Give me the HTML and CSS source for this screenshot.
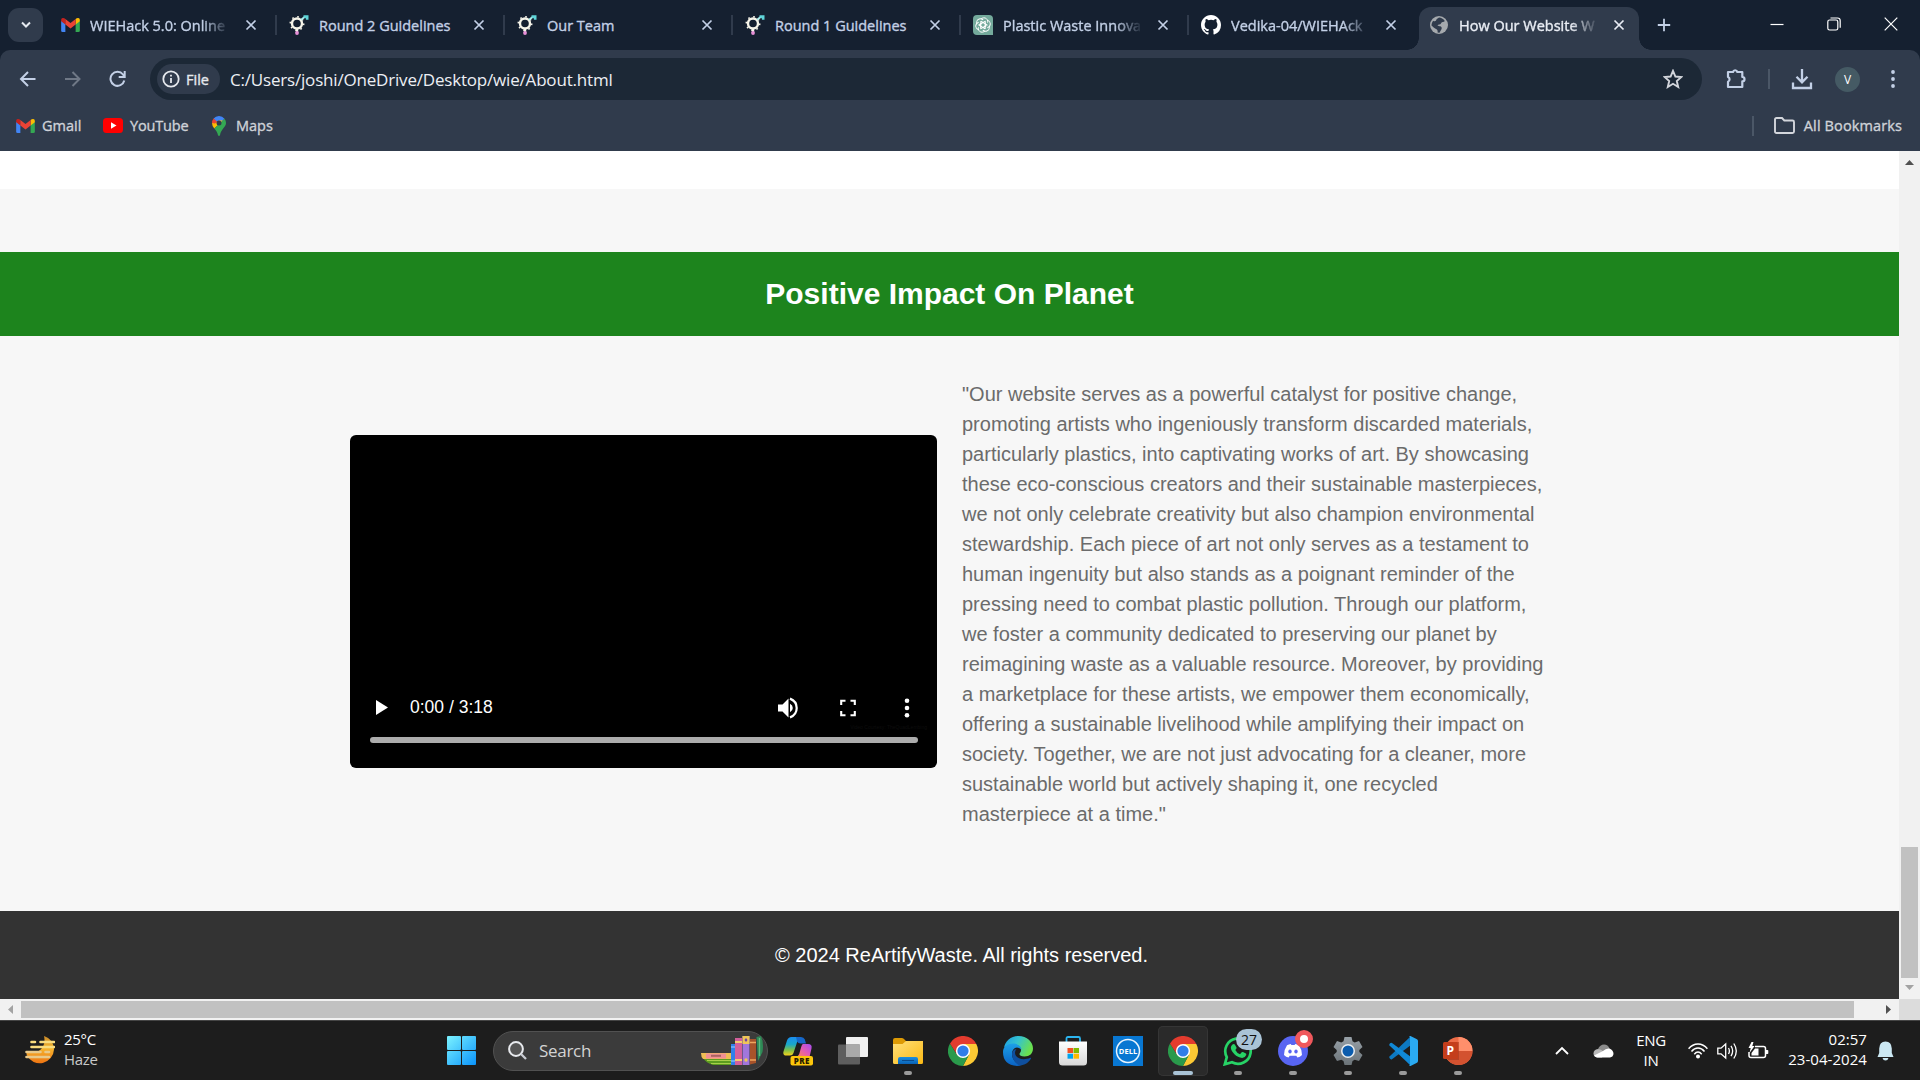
FILE: index.html
```html
<!DOCTYPE html>
<html lang="en">
<head>
<meta charset="utf-8">
<title>How Our Website Works</title>
<link rel="stylesheet" href="styles.css">
</head>
<body>
<svg class="defs" width="0" height="0" aria-hidden="true">
  <defs>
    <linearGradient id="moon" x1="0" y1="0" x2="0" y2="1"><stop offset="0" stop-color="#c98a2a"/><stop offset=".45" stop-color="#f5b52e"/><stop offset="1" stop-color="#ee7412"/></linearGradient>
    <linearGradient id="win" gradientUnits="userSpaceOnUse" x1="0" y1="0" x2="29" y2="29"><stop offset="0" stop-color="#7cf3ff"/><stop offset="1" stop-color="#0a93fb"/></linearGradient>
    <linearGradient id="cpA" x1="0" y1="0" x2="0" y2="1"><stop offset="0" stop-color="#1b8df0"/><stop offset=".4" stop-color="#19a7c9"/><stop offset=".7" stop-color="#7cc04a"/><stop offset="1" stop-color="#f4d21c"/></linearGradient>
    <linearGradient id="cpB" x1="1" y1="0" x2="0" y2="1"><stop offset="0" stop-color="#a44cf0"/><stop offset=".5" stop-color="#e35bb4"/><stop offset="1" stop-color="#ff8a4a"/></linearGradient>
    <linearGradient id="fold" x1="0" y1="0" x2="1" y2="1"><stop offset="0" stop-color="#ffe07a"/><stop offset="1" stop-color="#fbb914"/></linearGradient>
    <linearGradient id="blue" x1="0" y1="0" x2="0" y2="1"><stop offset="0" stop-color="#1b8fe0"/><stop offset="1" stop-color="#0a62b5"/></linearGradient>
    <linearGradient id="edgeA" x1="0" y1="0" x2="1" y2=".4"><stop offset="0" stop-color="#1a9be6"/><stop offset=".5" stop-color="#35c3cf"/><stop offset="1" stop-color="#6ae04e"/></linearGradient>
    <linearGradient id="edgeB" x1="0" y1="0" x2="0" y2="1"><stop offset="0" stop-color="#1da0e8"/><stop offset="1" stop-color="#0a62c4"/></linearGradient>
    <linearGradient id="store" x1="0" y1="0" x2="0" y2="1"><stop offset="0" stop-color="#fff"/><stop offset="1" stop-color="#d8d8d8"/></linearGradient>
    <linearGradient id="gear" x1="0" y1="0" x2="0" y2="1"><stop offset="0" stop-color="#98a1a8"/><stop offset="1" stop-color="#6b7378"/></linearGradient>
    <symbol id="close" viewBox="0 0 12 12"><path d="M1.500 1.500l9 9m0-9l-9 9" fill="none" stroke="currentColor" stroke-width="1.700"/></symbol>
    <symbol id="gmail" viewBox="0 0 20 15"><path d="M0 3v10.600Q0 15 1.400 15H4.500V6z" fill="#4285f4"/><path d="M20 3v10.600Q20 15 18.600 15H15.500V6z" fill="#34a853"/><path d="M15.500 1.200V7L20 3.600V2.100C20 .2 18-.6 16.600.4z" fill="#fbbc04"/><path d="M4.500 1.200V7L0 3.600V2.100C0 .2 2-.6 3.400.4z" fill="#c5221f"/><path d="M4.500 7V1.200L10 5.400l5.500-4.200V7L10 11.200z" fill="#ea4335"/></symbol>
    <symbol id="gender" viewBox="0 0 20 20"><circle cx="8" cy="8.500" r="5" fill="none" stroke="#f7f5ea" stroke-width="2.400"/><circle cx="8" cy="8.500" r="6.700" fill="none" stroke="#f7f5ea" stroke-width="1.600" stroke-dasharray="1.700 3.560"/><path d="M12 4.800l4-3" stroke="#aff0ee" stroke-width="1.800"/><path d="M14.500.3h5v4.400h-2.500l-.4-1.700-2.100-.4z" fill="#5fd4d8"/><path d="M8 14v4" stroke="#f7f5ea" stroke-width="2.400"/><circle cx="8" cy="18" r="1.900" fill="#e68fd6"/></symbol>
    <symbol id="gpt" viewBox="0 0 20 20"><path d="M4 0h12q4 0 4 4v16H4q-4 0-4-4V4q0-4 4-4z" fill="#74aa9c"/><g fill="none" stroke="#fff" stroke-width="1"><path id="petal" d="M8 4.100C9.500 2.500 12 2.400 13.400 3.700 14.800 5 14.800 6.500 14.500 7.600M12.300 6.200v4.900M12.300 6.200L8.200 8.500"/><use href="#petal" transform="rotate(60 10 10)"/><use href="#petal" transform="rotate(120 10 10)"/><use href="#petal" transform="rotate(180 10 10)"/><use href="#petal" transform="rotate(240 10 10)"/><use href="#petal" transform="rotate(300 10 10)"/></g></symbol>
    <symbol id="github" viewBox="0 0 16 16"><path fill="#fff" d="M8 0C3.580 0 0 3.580 0 8c0 3.540 2.290 6.530 5.470 7.590.4.070.55-.17.55-.38 0-.19-.01-.82-.01-1.490-2.010.37-2.530-.49-2.690-.94-.09-.23-.48-.94-.82-1.130-.28-.15-.68-.52-.01-.53.63-.01 1.080.58 1.230.82.72 1.210 1.870.87 2.330.66.07-.52.28-.87.51-1.070-1.780-.2-3.640-.89-3.640-3.950 0-.87.31-1.590.82-2.150-.08-.2-.36-1.020.08-2.120 0 0 .67-.21 2.200.82a7.500 7.500 0 014 0c1.530-1.040 2.200-.82 2.200-.82.44 1.100.16 1.920.08 2.120.51.560.82 1.270.82 2.150 0 3.070-1.870 3.750-3.650 3.950.29.250.54.730.54 1.480 0 1.070-.01 1.930-.01 2.200 0 .21.150.46.55.38A8 8 0 0016 8c0-4.420-3.580-8-8-8z"/></symbol>
    <symbol id="chrome" viewBox="0 0 30 30"><path d="M15 8h13.300A15 15 0 0 1 15 30l6.100-11.500z" fill="#fcc934"/><path d="M8.900 18.500L2 7.500A15 15 0 0 0 15 30l6.100-11.500z" fill="#2a9a4b"/><path d="M2 7.500A15 15 0 0 1 28.300 8H15l-6 10.500z" fill="#e33b2e"/><circle cx="15" cy="15" r="7.100" fill="#fff"/><circle cx="15" cy="15" r="5.600" fill="#2f7de9"/></symbol>
  </defs>
</svg>

<div class="tabstrip">
  <div class="tab-search"><svg width="12" height="8" viewBox="0 0 12 8"><path d="M2 1.500l4 4 4-4" fill="none" stroke="#e4e9f0" stroke-width="2"/></svg></div>
  <div class="tab"><svg class="fav small"><use href="#gmail"/></svg><span class="tab-title fade">WIEHack 5.0: Online</span><svg class="x"><use href="#close"/></svg></div>
  <div class="tab"><svg class="fav"><use href="#gender"/></svg><span class="tab-title">Round 2 Guidelines</span><svg class="x"><use href="#close"/></svg></div>
  <div class="tab"><svg class="fav"><use href="#gender"/></svg><span class="tab-title">Our Team</span><svg class="x"><use href="#close"/></svg></div>
  <div class="tab"><svg class="fav"><use href="#gender"/></svg><span class="tab-title">Round 1 Guidelines</span><svg class="x"><use href="#close"/></svg></div>
  <div class="tab"><svg class="fav"><use href="#gpt"/></svg><span class="tab-title fade">Plastic Waste Innova</span><svg class="x"><use href="#close"/></svg></div>
  <div class="tab last"><svg class="fav"><use href="#github"/></svg><span class="tab-title fade">Vedika-04/WIEHAck</span><svg class="x"><use href="#close"/></svg></div>
  <div class="tab active"><svg class="fav" viewBox="0 0 20 20"><circle cx="10" cy="10" r="9" fill="#a5a9ad"/><path d="M10 2.500c2 .2 4.500 1.300 5.800 3.500-1.300 1.500-3.300.5-3.800 2.500-.5 1.500-3 .6-3.500 2 1.500 1 4.500.2 4.200 3-.2 1.700-1.700 2-1.700 4-1.200.3-2.400 0-2.400 0 .2-2-.1-3-1.600-3.500-1.700-.6-3-2.500-4.500-3.500 0-2 .7-3.500 1.700-4.800 1 .9 2.800.8 3-.6.100-1.100 1.500-1.500 2.800-2.600z" fill="#303b4c"/></svg><span class="tab-title fade">How Our Website W</span><svg class="x"><use href="#close"/></svg></div>
  <svg class="plus" width="14" height="14" viewBox="0 0 14 14"><path d="M7 .8v12.400M.8 7h12.400" stroke="#c3d0e6" stroke-width="1.800"/></svg>
  <div class="win-controls">
    <svg width="14" height="14" viewBox="0 0 14 14"><path d="M.5 7.500h13" stroke="#fff" stroke-width="1.200"/></svg>
    <svg width="14" height="14" viewBox="0 0 14 14" fill="none" stroke="#fff" stroke-width="1.200"><rect x=".8" y="3" width="10" height="10" rx="1.800"/><path d="M3.500 1h7q2.700 0 2.700 2.700v7"/></svg>
    <svg width="14" height="14" viewBox="0 0 14 14"><path d="M.7.7l12.600 12.600m0-12.600L.7 13.300" stroke="#fff" stroke-width="1.200"/></svg>
  </div>
</div>

<div class="chrome-body">
  <div class="toolbar">
    <div class="nav">
      <svg width="18" height="18" viewBox="0 0 18 18" fill="none" stroke="#c3d0e6" stroke-width="2"><path d="M16.500 9H2.500M9 2L2 9l7 7"/></svg>
      <svg width="18" height="18" viewBox="0 0 18 18" fill="none" stroke="#6f7886" stroke-width="2"><path d="M1 9h14M8.500 2l7 7-7 7"/></svg>
      <svg width="18" height="18" viewBox="0 0 18 18" fill="none" stroke="#c3d0e6" stroke-width="2"><path d="M15.300 10.500A7 7 0 1 1 14 4.500l1.500 1.700M15.700 1v6h-6"/></svg>
    </div>
    <div class="omnibox">
      <div class="chip"><svg width="18" height="18" viewBox="0 0 18 18"><circle cx="9" cy="9" r="7.700" fill="none" stroke="#e6e9ee" stroke-width="1.800"/><path d="M9 8v5M9 4.700v1.900" stroke="#e6e9ee" stroke-width="1.800"/></svg><span class="chip-text">File</span></div>
      <span class="url">C:/Users/joshi/OneDrive/Desktop/wie/About.html</span>
      <svg class="star" width="20" height="20" viewBox="0 0 20 20"><path d="M10 1.800l2.400 5.700 6 .5-4.600 4 1.400 6L10 14.800 4.800 18l1.400-6L1.600 8l6-.5z" fill="none" stroke="#d3d6dc" stroke-width="1.900"/></svg>
    </div>
    <svg class="puzzle" width="22" height="22" viewBox="0 0 22 22"><path d="M3 4h5a2.200 2.200 0 0 1 4.300 0h5V9a2.200 2.200 0 0 1 0 4.400v5.600H3v-5.200a2.700 2.700 0 0 0 0-4.900z" fill="none" stroke="#c3d0e6" stroke-width="2.200" stroke-linejoin="round"/></svg>
    <i class="vline"></i>
    <svg class="dl" width="22" height="22" viewBox="0 0 22 22" fill="none" stroke="#c3d0e6" stroke-width="2.300"><path d="M11 1v13M5.500 8.800L11 14.300l5.500-5.500M2 14.500v5.500h18v-5.500"/></svg>
    <div class="avatar">V</div>
    <svg class="menu" width="6" height="20" viewBox="0 0 6 20" fill="#c3d0e6"><circle cx="3" cy="3" r="1.900"/><circle cx="3" cy="10" r="1.900"/><circle cx="3" cy="17" r="1.900"/></svg>
  </div>
  <div class="bookmarks">
    <div class="bm b1"><svg width="19" height="14"><use href="#gmail"/></svg><span>Gmail</span></div>
    <div class="bm b2"><svg width="20" height="15" viewBox="0 0 20 15"><rect width="20" height="15" rx="3.500" fill="#f00"/><path d="M8 4.300l5.500 3.200L8 10.700z" fill="#fff"/></svg><span>YouTube</span></div>
    <div class="bm b3"><svg width="14" height="20" viewBox="0 0 14 20"><path d="M7 0a7 7 0 0 1 5.500 2.700L6 9 1.600 2.500A7 7 0 0 1 7 0z" fill="#4285f4"/><path d="M1.600 2.500A7 7 0 0 0 0 7l3 2.500L5.500 6z" fill="#ea4335"/><path d="M0 7q0 3 2.300 5.500L11 4.500 7 4.500 3 7.500z" fill="#fbbc04"/><path d="M12.500 2.700Q14 4.500 14 7c0 4-5 6-6 12.300q-1 1.400-2 0C5.500 16 4 14.500 2.300 12.500z" fill="#34a853"/><circle cx="7" cy="7" r="2.500" fill="#303b4c"/></svg><span>Maps</span></div>
    <div class="bm all"><i class="vline"></i><svg width="21" height="17" viewBox="0 0 21 17"><path d="M1 14.500v-12Q1 1 2.500 1H8l2.300 2.500h8.200Q20 3.500 20 5v9.500q0 1.500-1.500 1.500h-16Q1 16 1 14.500z" fill="none" stroke="#d3d6dc" stroke-width="1.900"/></svg><span>All Bookmarks</span></div>
  </div>
</div>

<div class="viewport">
  <main class="page">
    <div class="white-strip"></div>
    <div class="gap"></div>
    <h2 class="banner">Positive Impact On Planet</h2>
    <section class="impact">
      <div class="video">
        <div class="watermark">Video Courtesy: TheQuadLembing</div>
        <div class="controls">
          <svg class="play" width="12" height="15" viewBox="0 0 12 15"><path d="M0 0l12 7.500L0 15z" fill="#fff"/></svg>
          <span class="time">0:00 / 3:18</span>
          <svg class="vol" width="20" height="22" viewBox="0 0 20 22"><path d="M0 7.500h4.500L10.500 1.500v19l-6-6H0z" fill="#fff"/><path d="M12 6.700q2.800 1.500 2.800 4.300T12 15.300z" fill="#fff"/><path d="M12 1.600q6.700 2.600 6.700 9.400T12 20.400" fill="none" stroke="#fff" stroke-width="2.200"/></svg>
          <svg class="full" width="16" height="18" viewBox="0 0 16 18"><path d="M1.200 6V1.700h4.300M10.500 1.700h4.300V6M14.800 12v4.300h-4.300M5.500 16.300H1.200V12" fill="none" stroke="#fff" stroke-width="2.100"/></svg>
          <svg class="more" width="6" height="20" viewBox="0 0 6 20" fill="#fff"><circle cx="3" cy="2.800" r="2.300"/><circle cx="3" cy="10" r="2.300"/><circle cx="3" cy="17.200" r="2.300"/></svg>
        </div>
        <div class="progress"></div>
      </div>
      <p class="copy">"Our website serves as a powerful catalyst for positive change, promoting artists who ingeniously transform discarded materials, particularly plastics, into captivating works of art. By showcasing these eco-conscious creators and their sustainable masterpieces, we not only celebrate creativity but also champion environmental stewardship. Each piece of art not only serves as a testament to human ingenuity but also stands as a poignant reminder of the pressing need to combat plastic pollution. Through our platform, we foster a community dedicated to preserving our planet by reimagining waste as a valuable resource. Moreover, by providing a marketplace for these artists, we empower them economically, offering a sustainable livelihood while amplifying their impact on society. Together, we are not just advocating for a cleaner, more sustainable world but actively shaping it, one recycled masterpiece at a time."</p>
    </section>
    <footer class="footer">© 2024 ReArtifyWaste. All rights reserved.</footer>
  </main>
  <div class="vscroll">
    <svg width="9" height="5" viewBox="0 0 9 5"><path d="M4.500 0L9 5H0z" fill="#505050"/></svg>
    <div class="vthumb"></div>
    <svg width="9" height="5" viewBox="0 0 9 5"><path d="M0 0h9L4.500 5z" fill="#a3a3a3"/></svg>
  </div>
  <div class="hscroll">
    <svg width="5" height="9" viewBox="0 0 5 9"><path d="M5 0v9L0 4.500z" fill="#a3a3a3"/></svg>
    <div class="hthumb"></div>
    <svg width="5" height="9" viewBox="0 0 5 9"><path d="M0 0l5 4.500L0 9z" fill="#505050"/></svg>
  </div>
  <div class="corner"></div>
</div>

<div class="taskbar">
  <div class="weather">
    <svg width="30" height="30" viewBox="0 0 30 30"><path d="M19 1C25 3 29 8 29 14.500a14.300 14.300 0 0 1-27 6q-1-2 0-3C11 20 22 14 19 1z" fill="url(#moon)"/><g stroke="#f8dc7e" stroke-width="2.600" stroke-linecap="round"><path d="M6.500 7h3.500M15.500 7H29M6.500 12H29"/><path d="M1.500 17h14M20.500 17h3.500M1.500 22H24" stroke="#e8c98a"/></g></svg>
    <div class="weather-text"><span>25°C</span><span class="dim">Haze</span></div>
  </div>
  <svg class="winlogo" width="29" height="29" viewBox="0 0 29 29" fill="url(#win)"><rect width="14" height="14" rx="1"/><rect x="15" width="14" height="14" rx="1"/><rect y="15" width="14" height="14" rx="1"/><rect x="15" y="15" width="14" height="14" rx="1"/></svg>
  <div class="search">
    <svg width="19" height="19" viewBox="0 0 19 19"><circle cx="8" cy="8" r="6.900" fill="#555" stroke="#e8eaee" stroke-width="2"/><path d="M13 13l5 5" stroke="#c9ccd2" stroke-width="2.300"/></svg>
    <span class="search-text">Search</span>
    <svg class="books" width="62" height="29" viewBox="0 0 62 29"><path d="M2 22h28v7H12q-7-2-10-7z" fill="#5c9c1f"/><path d="M6 24.500h24M10 27.500h20" stroke="#a8cf4a" stroke-width="1.200"/><path d="M0 17h30v6H2q-2-2-2-6z" fill="#eebd55"/><path d="M5 17.500h20v5H5z" fill="#f08f94"/><path d="M10 18.800h10v2H10z" fill="#a9635f"/><rect x="30" y="8" width="4" height="21" fill="#2f80ea"/><path d="M30 11h4M30 25h4" stroke="#9fd0ff"/><rect x="34" y="2" width="7" height="27" fill="#d3609c"/><path d="M34 6h7M34 24h7" stroke="#f5cb6d" stroke-width="1.800"/><rect x="41.500" width="7" height="29" fill="#a176dc"/><path d="M41.500 0h7v8h-7z" fill="#efc558"/><path d="M45 2l1.500 2L45 6l-1.500-2z" fill="#6a3fa8"/><circle cx="45" cy="24" r="1.700" fill="#efc558"/><path d="M49 3h6v24l-6 1.500z" fill="#a8532a"/><path d="M49 6.500h6M49 24h6" stroke="#efa65e" stroke-width="1.600"/><path d="M55.500 1l4.500-1Q63 7 61.500 16L57 25z" fill="#2f8a56"/><path d="M58.500 2v18" stroke="#62b983" stroke-width="1.300"/></svg>
  </div>
  <div class="apps">
    <div class="app"><svg width="30" height="30" viewBox="0 0 30 30"><path d="M4 4.500Q5.200 1 8.500 1H18q-2.500.5-3.400 3.500L10.500 17q-.8 2.500-3.500 2.500H3.500Q-.5 19.500.5 15.500z" fill="url(#cpA)"/><path d="M13 1h5q3 0 3.800 2.500L23 7.500h-5.500q-2.500 0-3.400-2z" fill="#1667c9"/><path d="M20 8h5q4.500 0 3.500 4.500L26.500 21H13q2.500-.8 3.200-3l2-7Q19 8 20 8z" fill="url(#cpB)"/><rect x="7.500" y="20" width="22.500" height="9.500" rx="2" fill="#fdc60b"/><text x="18.800" y="27.700" text-anchor="middle" class="pre">PRE</text></svg></div>
    <div class="app"><svg width="30" height="30" viewBox="0 0 30 30"><rect x="8" y="1" width="22" height="20" rx="1" fill="#f0f0f0"/><rect y="8.500" width="22" height="20" rx="1" fill="#5e5e5e"/><rect x="8" y="8.500" width="14" height="12.500" fill="#a9a9a9"/></svg></div>
    <div class="app"><svg width="30" height="30" viewBox="0 0 30 30"><path d="M0 4q0-2 2-2h7q1.500 0 2.500 1.500L13 5v4H0z" fill="#dd9a05"/><path d="M0 8h9.500L13 5h17v21.500q0 1.500-1.500 1.500h-27Q0 28 0 26.500z" fill="url(#fold)"/><path d="M5 28v-5q0-2 2-2h16q2 0 2 2v5z" fill="url(#blue)"/><path d="M9 24.500h12" stroke="#0a4a8c"/></svg><i class="run"></i></div>
    <div class="app"><svg width="30" height="30"><use href="#chrome"/></svg></div>
    <div class="app"><svg width="30" height="30" viewBox="0 0 30 30"><path d="M1 12C2 5 8 0 15.500 0 24 0 30 6 30 12.500c0 5-3.500 8-8.500 8-3.500 0-5-1.200-5-2.500 0-1 1.500-1.500 1.500-4C18 11 15 8.500 11 8.500 6 8.500 2 11 1 12z" fill="url(#edgeA)"/><path d="M0 16C0 10.500 5 7.500 10 7.500c5 0 8.500 3 8.500 6.500 0 0-1.500-2.500-4.500-2.500s-5 3-5 6.500c0 5 4 10 9.500 11Q16.500 30 14 30 0 29 0 16z" fill="url(#edgeB)"/><path d="M9.500 15.500C8 19 10 26 16 29.300c5 .5 9.500-2.500 12-6.800q.3-1-.7-.7C20 25 12.500 22.500 12 17q0-2.500 1.500-4-2.800.1-4 2.500z" fill="#0f4f9e"/></svg></div>
    <div class="app"><svg width="30" height="30" viewBox="0 0 30 30"><path d="M8.500 6V2.500Q8.500 1 10 1h10.500Q22 1 22 2.500V6" fill="none" stroke="#2cb5f0" stroke-width="1.800"/><path d="M1 5.500h28V26q0 3.500-3.500 3.500h-21Q1 29.500 1 26z" fill="url(#store)"/><path d="M9.500 12H15v5H9.500z" fill="#f25022"/><path d="M15.500 12H21v5h-5.500z" fill="#7fba00"/><path d="M9.500 17.700H15v5H9.500z" fill="#00a4ef"/><path d="M15.500 17.700H21v5h-5.500z" fill="#ffb900"/></svg></div>
    <div class="app"><svg width="30" height="30" viewBox="0 0 30 30"><path d="M0 0h30v30H0z" fill="#0877d2"/><circle cx="15" cy="15" r="11.500" fill="none" stroke="#e9f4fd" stroke-width="1.500"/><text x="15" y="18" text-anchor="middle" class="dell" textLength="18.500">DELL</text></svg></div>
    <div class="app current"><svg width="30" height="30"><use href="#chrome"/></svg><i class="run"></i></div>
    <div class="app"><svg width="30" height="30" viewBox="0 0 30 30"><path d="M1.800 28.300l2-7.200A12.700 12.700 0 1 1 9 26.300z" fill="#1d1d1d" stroke="#27d366" stroke-width="2.700"/><path d="M9.500 8.500q1.300-1.200 2.300 0l1.700 3q.3 1-1.200 2.500 1.500 3 4.700 4.200l1.700-1.900q.6-.5 1.300-.2l2.900 1.500q.6.400.3 1.500-.9 2.700-4 2.800C13.500 21.700 8 15.500 7.800 11.700q.1-1.900 1.700-3.200z" fill="#27d366"/></svg><span class="badge">27</span><i class="run"></i></div>
    <div class="app"><svg width="30" height="30" viewBox="0 0 30 30"><circle cx="15" cy="15" r="15" fill="#5865f2"/><path d="M9 9.200q2-1 3.800-1.200l.6 1.100h3.200l.6-1.100q1.800.200 3.800 1.200Q24 13.500 24 19q-2 2-4.600 2.500l-1.100-1.700h-6.600l-1.100 1.700Q8 21 6 19 6 13.500 9 9.200z" fill="#fff"/><ellipse cx="12" cy="15.500" rx="1.700" ry="1.900" fill="#5865f2"/><ellipse cx="18" cy="15.500" rx="1.700" ry="1.900" fill="#5865f2"/></svg><span class="dot"></span><i class="run"></i></div>
    <div class="app"><svg width="30" height="30" viewBox="0 0 30 30"><path d="M11.500 1h7l1 4.200 2.200 1.300 4.300-1.400 3.500 6-3.200 3v2l3.200 3-3.500 6-4.300-1.400-2.200 1.300-1 4h-7l-1-4-2.200-1.300L4 25.100l-3.500-6 3.200-3v-2l-3.200-3 3.500-6 4.300 1.400 2.200-1.300z" fill="url(#gear)"/><circle cx="15" cy="15" r="7" fill="#eceff1"/><circle cx="15" cy="15" r="5.500" fill="#0b5cad"/></svg><i class="run"></i></div>
    <div class="app"><svg width="30" height="30" viewBox="0 0 30 30"><path d="M1.500 20.500L22 1l1 8L4 23.300q-1 .5-2-.5-1.200-1.200-.5-2.300z" fill="#0d79c2"/><path d="M1.500 9.500Q.8 8.400 2 7.200q1-.8 2-.3L23 21l-1 8z" fill="#1088d6"/><path d="M21 30q1-.5 1-2V2q0-1.500-1-2l1.500 0 6 3Q30 3.700 30 5v20q0 1.300-1.500 2l-6 3z" fill="#2aaaf2"/></svg><i class="run"></i></div>
    <div class="app"><svg width="30" height="30" viewBox="0 0 30 30"><circle cx="15.500" cy="15" r="14" fill="#ed6c47"/><path d="M15.500 1a14 14 0 0 1 14 14h-14z" fill="#ff8f6b"/><path d="M1.500 15h28a14 14 0 0 1-28 0z" fill="#d35230"/><path d="M4 6h12v18H5z" fill="#a53a1f" opacity=".6"/><rect y="6" width="15" height="17" rx="1.500" fill="#c43e1c"/><text x="7.300" y="19" text-anchor="middle" class="ppt">P</text></svg><i class="run"></i></div>
  </div>
  <div class="tray">
    <svg class="chev" width="14" height="9" viewBox="0 0 14 9"><path d="M1 8l6-6 6 6" fill="none" stroke="#fff" stroke-width="1.800"/></svg>
    <svg class="cloud" width="21" height="14" viewBox="0 0 21 14"><path d="M5 5Q7 .5 11 .5q4 0 5.500 4L10 10z" fill="#8b8b8b"/><path d="M4.500 13.500Q.5 13 .5 9.500q0-4 4.500-4.500 3 0 6 3l-2 5.500z" fill="#b8b8b8"/><path d="M4 13.500q-2-.5-3-2L10 7q3-3 6.500-2.500Q20.500 6 20.500 10q-.5 3-3.500 3.500z" fill="#fff"/></svg>
    <div class="lang"><span>ENG</span><span>IN</span></div>
    <svg class="wifi" width="20" height="16" viewBox="0 0 20 16" fill="none" stroke="#fff" stroke-width="1.400"><path d="M.6 5.800Q4.500 1 10 1t9.400 4.800M3.500 8.500Q6.300 5 10 5t6.500 3.500M6.300 11.200Q8 9 10 9t3.700 2.200"/><circle cx="10" cy="13.500" r="1.300" fill="#fff"/></svg>
    <svg class="spk" width="21" height="18" viewBox="0 0 21 18" fill="none" stroke="#fff" stroke-width="1.300"><path d="M.8 6.200H4L8.700 2v14L4 11.800H.8zM11.500 6q1.800 3 0 6M14 3.800q3.300 5.200 0 10.400M16.800 1.500q5 7.500 0 15"/></svg>
    <svg class="bat" width="21" height="18" viewBox="0 0 21 18"><path d="M7 4.500h8.500q2 0 2 2v7q0 2-2 2H3q-2 0-2-2V10" fill="none" stroke="#fff" stroke-width="1.500"/><path d="M7 6.500h3.500v7h-7V11z" fill="#fff"/><path d="M18 8h1.500q.8 0 .8.800v2.400q0 .8-.8.800H18z" fill="#fff"/><path d="M3.500 0L.5 6h2.200L1.500 11 6.500 4H4.300L5.500 0z" fill="#fff"/></svg>
    <div class="clock"><span>02:57</span><span>23-04-2024</span></div>
    <svg class="bell" width="17" height="20" viewBox="0 0 17 20"><path d="M8.500.5q6 0 6.300 7v4.500L16.500 16H.5l1.700-4V7.500q.3-7 6.300-7zM5.500 17h6q-.7 2.500-3 2.500t-3-2.500z" fill="#cbe8f3"/></svg>
  </div>
</div>
</body>
</html>
```

FILE: styles.css
```css
* { box-sizing: border-box; }
html, body { margin: 0; height: 100%; overflow: hidden; }
body {
  display: flex; flex-direction: column;
  width: 1920px; height: 1080px;
  background: #152030;
  font-family: "Open Sans", "Noto Sans", sans-serif;
}
svg { display: block; flex: none; }
.defs { position: absolute; }

/* Tab strip */
.tabstrip { display: flex; height: 50px; padding-left: 8px; background: #152030; }
.tab-search {
  display: flex; align-items: center; justify-content: center;
  width: 35px; height: 34px; margin: 8px 4px 0 0;
  border-radius: 11px; background: #303b4c;
}
.tab {
  position: relative; display: flex; align-items: center;
  width: 228px; height: 50px; padding: 0 18px 0 14px; color: #c3d0e6;
}
.tab::after {
  content: ""; position: absolute; right: -2px; top: 15px;
  width: 2px; height: 20px; background: #303b4c;
}
.tab.last::after { display: none; }
.fav { width: 20px; height: 20px; }
.fav.small { width: 19px; height: 14px; }
.tab-title {
  width: 138px; margin-left: 10px; padding-top: 1px; overflow: hidden;
  font-size: 14.500px; line-height: 20px; white-space: nowrap;
  letter-spacing: 0; -webkit-text-stroke: 0.350px currentColor;
}
.fade { mask-image: linear-gradient(90deg, #000 112px, transparent 140px); }
.x { width: 12px; height: 12px; margin-left: auto; }
.tab.active { color: #e9edf4; isolation: isolate; }
.tab.active::before {
  content: ""; position: absolute; z-index: -1; left: 4px; top: 7px;
  width: 220px; height: 43px; border-radius: 12px 12px 0 0; background: #303b4c;
}
.tab.active::after {
  z-index: -1; left: -8px; right: auto; top: 38px; width: 244px; height: 12px;
  background:
    radial-gradient(circle at 0 0, transparent 11.500px, #303b4c 12px) left / 12px 12px no-repeat,
    radial-gradient(circle at 100% 0, transparent 11.500px, #303b4c 12px) right / 12px 12px no-repeat;
}
.plus { margin: 18px 0 0 14px; }
.win-controls { display: flex; gap: 43px; margin: 17px 22px 0 auto; }

/* Toolbar and bookmarks */
.chrome-body { height: 101px; background: #303b4c; border-radius: 10px 10px 0 0; }
.toolbar { display: flex; align-items: center; height: 58px; padding: 0 24px 0 19px; }
.nav { display: flex; gap: 27px; width: 131px; }
.omnibox {
  display: flex; align-items: center; width: 1552px; height: 42px;
  padding: 0 19px 0 7px; border-radius: 21px; background: #1c2836;
}
.chip {
  display: flex; align-items: center; gap: 6px; width: 63px; height: 30px;
  padding-left: 5px; border-radius: 15px; background: #303b4c; color: #e6e9ee;
}
.chip-text { font-size: 14.500px; -webkit-text-stroke: 0.350px currentColor; }
.url { margin-left: 10px; color: #eceff4; font-size: 17px; letter-spacing: -0.190px; white-space: nowrap; }
.star { margin-left: auto; }
.puzzle { margin-left: 23px; }
.vline { width: 2px; height: 20px; background: #4b5767; }
.toolbar .vline { margin-left: 21px; }
.dl { margin-left: 21px; }
.avatar {
  width: 25px; height: 25px; margin-left: 22px; border-radius: 50%;
  background: #455a64; color: #fff; font-size: 12px; line-height: 25px; text-align: center;
}
.menu { margin-left: auto; }
.bookmarks { display: flex; align-items: center; height: 35px; padding: 0 18px 0 16px; }
.bm {
  display: flex; align-items: center; color: #cfd2d8; font-size: 14.500px;
  line-height: 20px; white-space: nowrap; -webkit-text-stroke: 0.350px currentColor;
}
.bm span { margin-left: 7px; }
.b1 { width: 87px; }
.b2 { width: 109px; letter-spacing: -0.150px; }
.b3 span { margin-left: 10px; }
.all { margin-left: auto; letter-spacing: 0.120px; }
.all svg { margin-left: 20px; }
.all span { margin-left: 9px; }

/* Page viewport */
.viewport {
  display: grid; grid-template-columns: 1899px 21px; grid-template-rows: 848px 21px;
  height: 869px; font-family: Arial, "Liberation Sans", sans-serif;
}
.page { display: flex; flex-direction: column; background: #f7f7f7; overflow: hidden; }
.white-strip { height: 38px; background: #fff; }
.gap { height: 63px; }
.banner {
  margin: 0; height: 84px; background: #1d841d; color: #fff;
  font-size: 30px; line-height: 84px; text-align: center;
}
.impact {
  display: flex; align-items: center; gap: 25px;
  height: 575px; padding: 0 350px 40px;
}
.video {
  display: flex; flex-direction: column; justify-content: flex-end;
  position: relative; width: 587px; height: 333px; margin-top: -5px;
  padding: 0 19px 25px 20px; border-radius: 6px; background: #000;
}
.watermark {
  position: absolute; right: 10px; bottom: 37px;
  color: #0d0d0d; font-size: 5px; line-height: 8px; white-space: nowrap;
}
.controls { display: flex; align-items: center; height: 24px; margin-bottom: 17px; padding-left: 6px; }
.time { margin-left: 22px; color: #fff; font-size: 17.500px; white-space: nowrap; }
.vol { margin-left: auto; }
.full { margin-left: 42px; }
.more { margin: 0 8px 0 48px; }
.progress { height: 6px; border-radius: 3px; background: #acacac; }
.copy { width: 587px; margin: 0; color: #6b6b6b; font-size: 20px; line-height: 30px; }
.footer {
  height: 88px; padding-left: 24px; background: #333; color: #fff;
  font-size: 20px; line-height: 88px; text-align: center;
}
.vscroll { display: flex; flex-direction: column; align-items: center; padding: 9px 0; background: #f1f1f1; }
.vthumb { width: 17px; height: 131px; margin: auto 0 7px; background: #c1c1c1; }
.hscroll { display: flex; align-items: center; padding: 0 8px; background: #f1f1f1; }
.hthumb { width: 1833px; height: 17px; margin: 0 auto 0 8px; background: #c1c1c1; }
.corner { background: #dcdcdc; }

/* Taskbar */
.taskbar {
  display: flex; align-items: center; height: 60px;
  border-top: 1px solid #454545; background: #1d1d1d;
  color: #fff; font-size: 15px; line-height: 20px;
}
.weather { display: flex; align-items: center; gap: 9px; width: 447px; padding-left: 25px; }
.weather > svg { margin-bottom: 2px; }
.weather-text, .lang, .clock { display: flex; flex-direction: column; letter-spacing: -0.300px; white-space: nowrap; }
.weather-text, .clock { padding-bottom: 4px; }
.dim { color: #c9c9c9; }
.search {
  display: flex; align-items: center; width: 275px; height: 40px; margin-left: 17px;
  padding: 0 4px 0 14px; border: 1px solid #515151; border-radius: 20px; background: #3b3b3b;
}
.search-text { margin-left: 12px; color: #d3d3d3; font-size: 17px; letter-spacing: -0.300px; }
.books { margin: 0 0 1px auto; }
.apps { display: flex; gap: 5px; margin-left: 5px; }
.app {
  position: relative; display: flex; align-items: center; justify-content: center;
  width: 50px; height: 50px; border-radius: 5px;
}
.app.current { background: #2a2a2a; box-shadow: inset 0 0 0 1px #353535; }
.run {
  position: absolute; left: 21px; bottom: 1px; width: 8px; height: 4px;
  border-radius: 2px; background: #9a9a9a;
}
.current .run { left: 15px; width: 20px; background: #a9c3d6; }
.badge {
  position: absolute; left: 23px; top: 3px; width: 26px; height: 21px;
  border-radius: 11px; background: #a9c3d6; color: #111;
  font-size: 14px; line-height: 21px; text-align: center;
}
.dot {
  position: absolute; left: 27px; top: 4px; width: 18px; height: 18px;
  border: 5px solid #f0585c; border-radius: 50%; background: #fff;
}
.pre { fill: #2a1d00; font-size: 8px; font-weight: 800; letter-spacing: 0.400px; }
.dell { fill: #fff; font-size: 7.500px; font-weight: 700; }
.ppt { fill: #fff; font-size: 12px; font-weight: 700; }
.tray { display: flex; align-items: center; margin-left: auto; padding-right: 26px; }
.chev { margin-right: 1px; }
.cloud { margin-left: 23px; }
.lang { width: 34px; margin-left: 20px; padding-bottom: 2px; text-align: center; }
.wifi { margin-left: 20px; }
.spk { margin-left: 9px; }
.bat { margin-left: 10px; }
.clock { width: 82px; margin-left: 16px; align-items: flex-end; letter-spacing: 0.050px; }
.bell { margin-left: 10px; }
```
